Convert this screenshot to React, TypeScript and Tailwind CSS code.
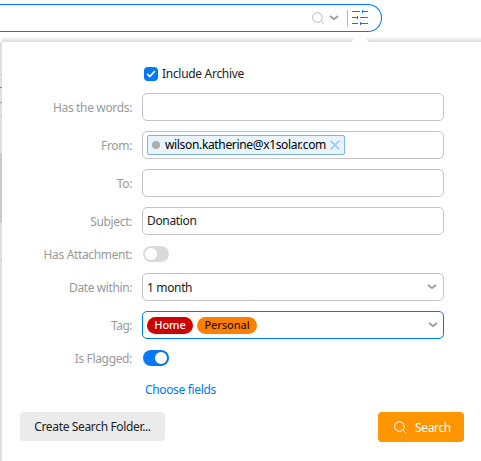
import clsx from "clsx";
import type { ReactNode } from "react";

function SearchIcon({ className }: { className?: string }) {
  return (
    <svg
      viewBox="0 0 13 13"
      fill="none"
      stroke="currentColor"
      aria-hidden="true"
      className={clsx("h-[13px] w-[13px] shrink-0", className)}
    >
      <circle cx="5.4" cy="5.5" r="4.8" />
      <path d="M9 9l3.2 3.2" />
    </svg>
  );
}

function ChevronIcon({ className }: { className?: string }) {
  return (
    <svg
      viewBox="0 0 10 6"
      fill="none"
      stroke="currentColor"
      strokeWidth="1.8"
      aria-hidden="true"
      className={clsx("h-[6px] w-[10px] shrink-0", className)}
    >
      <path d="M1 1l4 3.2L9 1" />
    </svg>
  );
}

function FiltersIcon() {
  return (
    <svg
      viewBox="0 0 16 16"
      fill="none"
      stroke="#0078f8"
      aria-label="Search options"
      className="h-4 w-4 shrink-0"
    >
      <path d="M0 1.5h8M10.5 0v3M10.5 1.5H16M0 7.5h5M5.5 6v3M8 7.5h8M0 13.5h6M8.5 12v3M8.5 13.5H16" />
    </svg>
  );
}

function Row({
  label,
  labelClassName = "tracking-[-0.35px]",
  compact,
  children,
}: {
  label: string;
  labelClassName?: string;
  compact?: boolean;
  children: ReactNode;
}) {
  return (
    <div
      className={clsx("flex items-center gap-[10px]", compact ? "h-[18px]" : "h-7")}
    >
      <span
        className={clsx(
          "w-[130px] shrink-0 pt-px text-right text-[#999]",
          labelClassName,
        )}
      >
        {label}
      </span>
      {children}
    </div>
  );
}

function Field({
  active,
  className,
  children,
}: {
  active?: boolean;
  className?: string;
  children?: ReactNode;
}) {
  return (
    <div
      className={clsx(
        "flex h-7 w-[302px] items-center rounded-[5px] border bg-white pl-1",
        active ? "border-[#0078f8]" : "border-[#c4c4c4]",
        className,
      )}
    >
      {children}
    </div>
  );
}

function Toggle({ on }: { on?: boolean }) {
  return (
    <span
      role="switch"
      aria-checked={!!on}
      className={clsx(
        "ml-px flex h-4 w-[26px] items-center rounded-full px-[2px]",
        on ? "justify-end bg-[#0078f8]" : "bg-[#dadada]",
      )}
    >
      <span className="h-3 w-3 rounded-full bg-white" />
    </span>
  );
}

export default function App() {
  return (
    <div className="flex h-[461px] w-[481px] flex-col overflow-hidden bg-white font-['Noto_Sans',sans-serif] text-[12px] leading-4 tracking-[-0.35px] text-[#222]">
      <div className="h-[42px] shrink-0 pt-1">
        <div className="flex h-7 w-[382px] items-center justify-end rounded-r-full border border-l-0 border-[#0078f8] pr-[13px]">
          <SearchIcon className="text-[#b5b5b5]" />
          <ChevronIcon className="mr-[8px] ml-[4px] text-[#999]" />
          <span className="mr-1 h-[17px] w-px bg-[#bbb]" />
          <FiltersIcon />
        </div>
      </div>

      <div className="flex min-h-0 flex-1">
        <div className="w-[2px] shrink-0 bg-[#e0e0e0]">
          <div className="mt-8 h-px bg-[#ccc]" />
          <div className="mt-3 h-px bg-[#888]" />
          <div className="mt-[14px] h-px bg-[#999]" />
          <div className="mt-3 h-px bg-[#c8c8c8]" />
          <div className="mt-[37px] h-[70px] bg-[#cacaca]" />
          <div className="mt-9 h-px bg-[#c8c8c8]" />
        </div>

        <div className="relative flex-1 bg-white">
          <div className="absolute -top-[5px] right-0 left-0 h-[5px] bg-linear-to-b from-white to-[#d9d9d9]" />
          <svg
            viewBox="0 0 18 6"
            className="absolute -top-[6px] left-[349px] h-[6px] w-[18px]"
            aria-hidden="true"
          >
            <path d="M0 6L6 0h6l6 6z" fill="#fff" />
          </svg>

          <div className="flex h-[51px] items-center gap-1 pt-[13px] pl-[142px]">
            <span className="flex h-[14px] w-[14px] items-center justify-center rounded-[4px] bg-[#0078f8]">
              <svg
                viewBox="0 0 10 8"
                fill="none"
                stroke="#fff"
                strokeWidth="1.7"
                className="h-2 w-[10px]"
                aria-hidden="true"
              >
                <path d="M1.2 3.9l2.6 2.6L8.8 1.2" />
              </svg>
            </span>
            <span className="tracking-[-0.3px]">Include Archive</span>
          </div>

          <div className="flex flex-col gap-[10px]">
            <Row label="Has the words:">
              <Field />
            </Row>
            <Row label="From:">
              <Field>
                <span className="flex h-5 w-[198px] items-center rounded-[2px] border border-[#7fb2ec] bg-[#eaf4fe] pl-1 text-black">
                  <span className="mr-[5px] h-2 w-2 shrink-0 rounded-full bg-[#adadad]" />
                  <span className="tracking-[-0.34px]">
                    wilson.katherine@x1solar.com
                  </span>
                  <svg
                    viewBox="0 0 10 10"
                    stroke="#a6d1fb"
                    strokeWidth="2"
                    className="mr-1 ml-auto h-[10px] w-[10px] shrink-0"
                    aria-hidden="true"
                  >
                    <path d="M.7.7l8.6 8.6M9.3.7L.7 9.3" />
                  </svg>
                </span>
              </Field>
            </Row>
            <Row label="To:">
              <Field />
            </Row>
            <Row label="Subject:">
              <Field>Donation</Field>
            </Row>
            <Row label="Has Attachment:" compact>
              <Toggle />
            </Row>
            <Row label="Date within:" labelClassName="tracking-[-0.4px]">
              <Field className="justify-between pr-[6px]">
                <span className="pt-px">1 month</span>
                <ChevronIcon className="text-[#999]" />
              </Field>
            </Row>
            <Row label="Tag:" labelClassName="tracking-[-0.5px]">
              <Field active className="gap-1 pr-[5px]">
                <span className="flex h-[17px] w-[46px] items-center justify-center rounded-full bg-[#cc0000] text-[11px] font-medium tracking-[-0.1px] text-white">
                  Home
                </span>
                <span className="flex h-[17px] w-[60px] items-center justify-center rounded-full bg-[#ff8000] text-[11px] font-medium tracking-[-0.1px] text-[#331500]">
                  Personal
                </span>
                <ChevronIcon className="ml-auto text-[#999]" />
              </Field>
            </Row>
            <Row label="Is Flagged:" compact>
              <Toggle on />
            </Row>
          </div>

          <div className="mt-[15px] pl-[143px] text-[#0078f8]">Choose fields</div>

          <div className="mt-[14px] flex justify-between pr-[17px] pl-[18px]">
            <button
              type="button"
              className="h-[29px] w-[145px] rounded-[4px] bg-[#ebebeb]"
            >
              Create Search Folder...
            </button>
            <button
              type="button"
              className="flex h-[30px] w-[86px] items-center rounded-[4px] bg-[#ff9500] pl-4 text-white"
            >
              <SearchIcon className="mr-2" />
              <span className="pt-px">Search</span>
            </button>
          </div>
        </div>
      </div>
    </div>
  );
}
